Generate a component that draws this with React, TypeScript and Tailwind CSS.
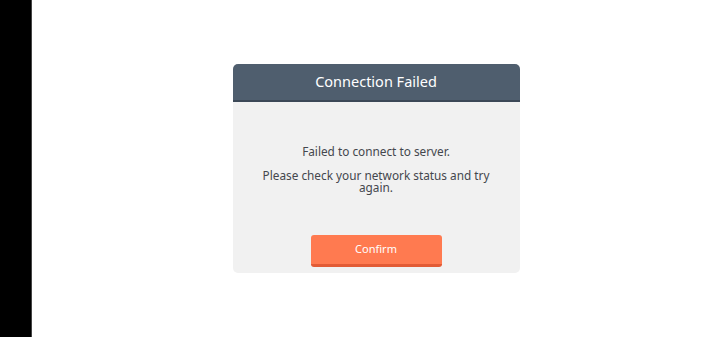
export default function App() {
  return (
    <div className="flex h-[337px] w-[720px] bg-white" style={{ fontFamily: '"Noto Sans", "Open Sans", sans-serif' }}>
      <div className="h-full w-[31px] shrink-0 bg-black" />
      <div className="h-full w-px shrink-0 bg-[#444]" />
      <div className="flex flex-1 items-center justify-center">
        <div className="flex w-[287px] flex-col overflow-hidden rounded-[5px] bg-[#f1f1f1]">
          <div className="flex h-[38px] items-center justify-center border-b-2 border-[#3c4857] bg-[#4f5e6e]">
            <span className="text-[14.5px] text-white">Connection Failed</span>
          </div>
          <div className="flex flex-col items-center px-4 pt-[43px] text-center text-[11.8px] leading-[12px] text-[#44474d]">
            <p>Failed to connect to server.</p>
            <p className="mt-[12px] w-[240px]">Please check your network status and try again.</p>
          </div>
          <div className="flex justify-center pt-[42px] pb-[6px]">
            <button className="h-[32px] w-[131px] rounded-[3px] border-b-[3px] border-[#e25b35] bg-[#ff7a50] text-[11px] text-white">
              Confirm
            </button>
          </div>
        </div>
      </div>
    </div>
  );
}
